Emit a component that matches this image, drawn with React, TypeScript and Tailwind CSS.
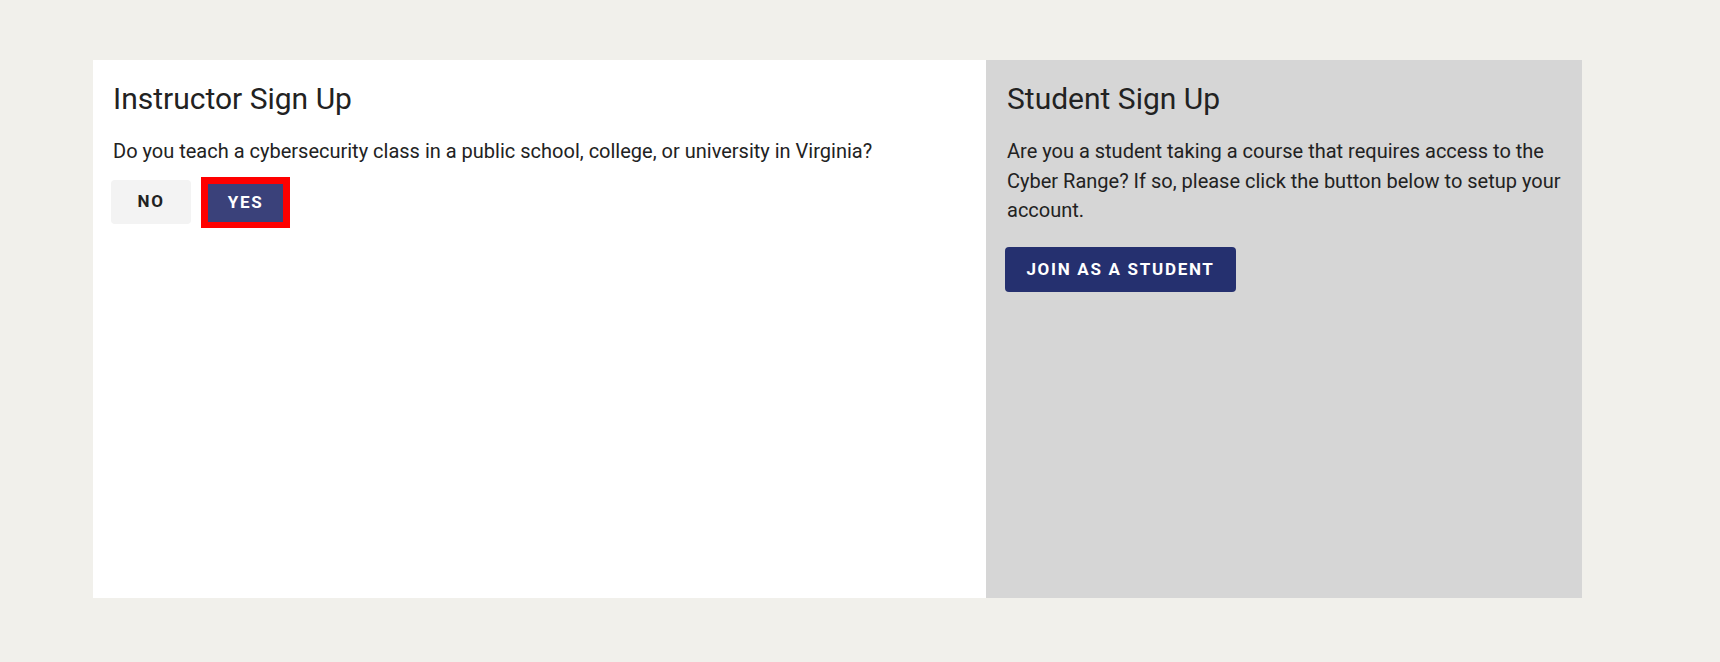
export default function App() {
  return (
    <div
      className="min-h-screen w-full bg-[#f1f0eb] pl-[93px] pt-[60px]"
      style={{ fontFamily: "Roboto, 'Noto Sans', sans-serif" }}
    >
      <div className="flex h-[538px] w-[1489px]">
        <section className="w-[893px] bg-white px-5 pt-[21px] text-[#222]">
          <h2 className="text-[30px] leading-[1.2] font-normal">Instructor Sign Up</h2>
          <p className="mt-[20px] text-[20px] leading-[29.7px]">
            Do you teach a cybersecurity class in a public school, college, or university in Virginia?
          </p>
          <div className="mt-[10px] flex items-center gap-[10px]">
            <button
              type="button"
              className="-ml-[2px] h-[44px] w-[80px] rounded-[4px] bg-[#f3f3f3] text-[17px] font-bold tracking-[0.1em] text-[#222]"
            >
              NO
            </button>
            <div className="border-[7px] border-b-[6px] border-[#ff0000]">
              <button
                type="button"
                className="block h-[38px] w-[75px] bg-[#3a417a] text-[17px] font-bold tracking-[0.1em] text-white"
              >
                YES
              </button>
            </div>
          </div>
        </section>
        <section className="w-[596px] bg-[#d6d6d6] pl-[21px] pr-5 pt-[21px] text-[#222]">
          <h2 className="text-[30px] leading-[1.2] font-normal">Student Sign Up</h2>
          <p className="mt-[20px] text-[20px] leading-[29.7px]">
            Are you a student taking a course that requires access to the Cyber Range? If so, please
            click the button below to setup your account.
          </p>
          <button
            type="button"
            className="-ml-[2px] mt-[21px] h-[45px] w-[231px] rounded-[4px] bg-[#25306f] text-[17px] font-bold tracking-[0.1em] text-white"
          >
            JOIN AS A STUDENT
          </button>
        </section>
      </div>
    </div>
  );
}
